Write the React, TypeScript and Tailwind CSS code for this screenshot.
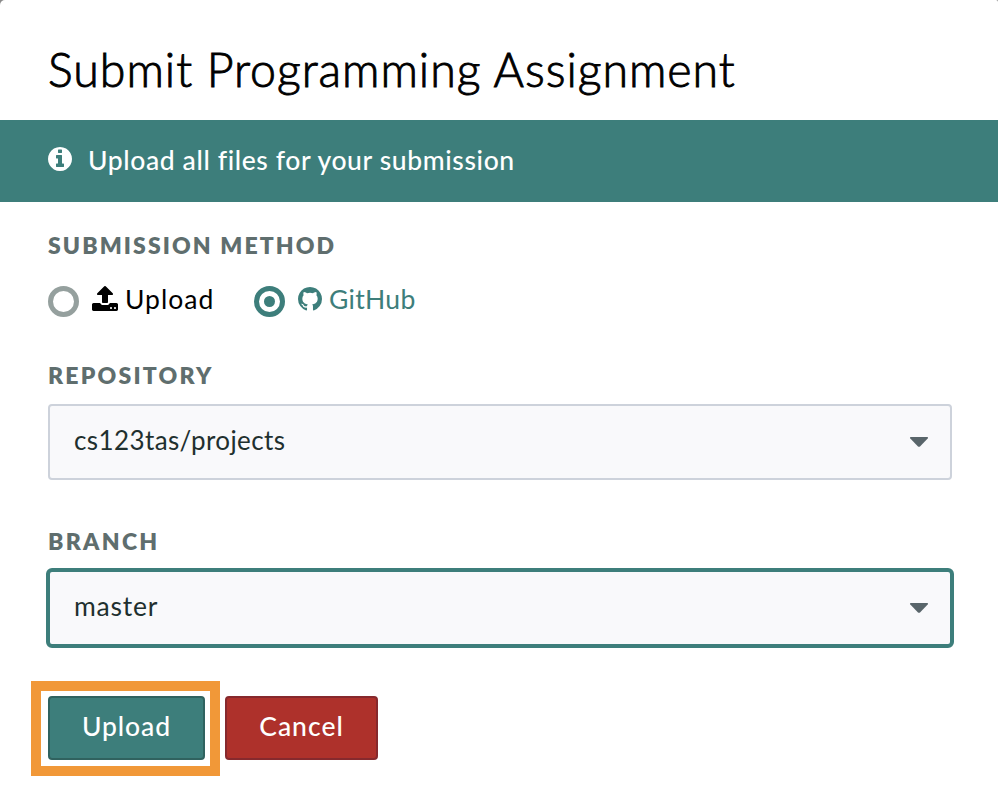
import React from "react";

function Icon({ d, className }: { d: string; className: string }) {
  return (
    <svg viewBox="0 0 1792 1792" fill="currentColor" className={className} aria-hidden="true">
      <path d={d} />
    </svg>
  );
}

const INFO =
  "M1152 1376v-160q0-14-9-23t-23-9h-96v-512q0-14-9-23t-23-9h-320q-14 0-23 9t-9 23v160q0 14 9 23t23 9h96v320h-96q-14 0-23 9t-9 23v160q0 14 9 23t23 9h448q14 0 23-9t9-23zm-128-896v-160q0-14-9-23t-23-9h-192q-14 0-23 9t-9 23v160q0 14 9 23t23 9h192q14 0 23-9t9-23zm640 416q0 209-103 385.5t-279.5 279.5-385.5 103-385.5-103-279.5-279.5-103-385.5 103-385.5 279.5-279.5 385.5-103 385.5 103 279.5 279.5 103 385.5z";
const UPLOAD =
  "M1344 1472q0-26-19-45t-45-19-45 19-19 45 19 45 45 19 45-19 19-45zm256 0q0-26-19-45t-45-19-45 19-19 45 19 45 45 19 45-19 19-45zm128-224v320q0 40-28 68t-68 28h-1472q-40 0-68-28t-28-68v-320q0-40 28-68t68-28h427q21 56 70.5 92t110.5 36h256q61 0 110.5-36t70.5-92h427q40 0 68 28t28 68zm-325-648q-17 40-59 40h-256v448q0 26-19 45t-45 19h-256q-26 0-45-19t-19-45v-448h-256q-42 0-59-40-17-39 14-69l448-448q18-19 45-19t45 19l448 448q31 30 14 69z";
const GITHUB =
  "M896 128q209 0 385.5 103t279.5 279.5 103 385.5q0 251-146.5 451.5t-378.5 277.5q-27 5-40-7t-13-30q0-3 .5-76.5t.5-134.5q0-97-52-142 57-6 102.5-18t94-39 81-66.5 53-105 20.5-150.5q0-119-79-206 37-91-8-204-28-9-81 11t-92 44l-38 24q-93-26-192-26t-192 26q-16-11-42.5-27t-83.5-38.5-85-13.5q-45 113-8 204-79 87-79 206 0 85 20.5 150t52.5 105 80.5 67 94 39 102.5 18q-39 36-49 103-21 10-45 15t-57 5-65.5-21.5-55.5-62.5q-19-32-48.5-52t-49.5-24l-20-3q-21 0-29 4.5t-5 11.5 9 14 13 12l7 5q22 10 43.5 38t31.5 51l10 23q13 38 44 61.5t67 30 69.5 7 55.5-3.5l23-4q0 38 .5 88.5t.5 54.5q0 18-13 30t-40 7q-232-77-378.5-277.5t-146.5-451.5q0-209 103-385.5t279.5-279.5 385.5-103z";

function Heading({ children, className }: { children: React.ReactNode; className: string }) {
  return (
    <h2 className={`text-[23px] leading-7 font-extrabold text-[#5f6e6e] uppercase ${className}`}>{children}</h2>
  );
}

function Caret() {
  return (
    <svg viewBox="0 0 20 12" className="h-3 w-5 fill-[#59656a]" aria-hidden="true">
      <path d="M1.6 1H18.4Q19.6 1.3 18.7 2.4L11 10.4Q10 11.3 9 10.4L1.3 2.4Q.4 1.3 1.6 1Z" />
    </svg>
  );
}

export default function App() {
  return (
    <div className="h-[806px] w-[998px] bg-[#8a8a8a] font-['Lato',sans-serif]">
      <main className="flex h-full flex-col rounded-tl-[5px] rounded-tr-[2px] bg-white">
        <header className="flex h-[120px] items-center px-12 pt-[19px]">
          <h1 className="text-[46.5px] leading-none font-light tracking-[0.97px] whitespace-nowrap text-black [-webkit-text-stroke:0.9px_black]">
            Submit Programming Assignment
          </h1>
        </header>
        <div className="flex h-[82px] items-center bg-[#3d7e7b] pr-12 pl-[46px] text-white">
          <Icon d={INFO} className="-mt-1 size-7" />
          <p className="-mt-[3px] ml-3.5 text-[26.5px] leading-8 font-medium tracking-[0.62px] whitespace-nowrap">
            Upload all files for your submission
          </p>
        </div>

        <form className="flex flex-col pr-[46px] pl-12 pt-[29px]" onSubmit={(e) => e.preventDefault()}>
          <Heading className="tracking-[2.1px]">Submission Method</Heading>
          <div className="mt-[25px] flex h-8 items-center text-[26.5px] leading-8">
            <label className="flex items-center text-black">
              <span className="mt-0.5 size-[31px] rounded-full border-[5px] border-[#95a09e]" />
              <Icon d={UPLOAD} className="-mt-0.5 ml-3 size-7" />
              <span className="-mt-0.5 ml-1.5 w-[88px] tracking-[1px]">Upload</span>
            </label>
            <label className="ml-[41px] flex items-center text-[#3d7e7b]">
              <span className="mt-0.5 flex size-[31px] items-center justify-center rounded-full border-[5px] border-[#3d7e7b]">
                <span className="size-[11px] rounded-full bg-[#3d7e7b]" />
              </span>
              <Icon d={GITHUB} className="-mt-0.5 ml-[11px] size-7" />
              <span className="-mt-0.5 ml-[5px] tracking-[0.3px]">GitHub</span>
            </label>
          </div>

          <Heading className="mt-[45px] tracking-[2.2px]">Repository</Heading>
          <button
            type="button"
            className="mt-[15px] flex h-[76px] items-center justify-between rounded-[4px] border-2 border-[#cdd2db] bg-[#f9f9fb] pr-[21px] pl-6 text-[26px] text-[#1f302f]"
          >
            <span className="-mt-[3px] tracking-[0.4px]">cs123tas/projects</span>
            <Caret />
          </button>

          <Heading className="mt-[47px] tracking-[2.3px]">Branch</Heading>
          <button
            type="button"
            className="-mx-0.5 mt-[13px] flex h-20 items-center justify-between rounded-[6px] border-4 border-[#3d7e7b] bg-[#f9f9fb] pr-[21px] pl-6 text-[26.5px] text-[#1f302f]"
          >
            <span className="-mt-0.5 tracking-[0.8px]">master</span>
            <Caret />
          </button>

          <div className="mt-[33px] -ml-[17px] flex items-start">
            <div className="h-[95px] w-[189px] border-10 border-[#f19838] pt-[5px] pl-[7px]">
              <button
                type="submit"
                className="block h-16 w-[157px] rounded-[4px] border-2 border-[#30625f] bg-[#3d7e7b] pb-0.5 text-[26.5px] font-medium tracking-[0.9px] text-white"
              >
                Upload
              </button>
            </div>
            <button
              type="button"
              className="mt-[15px] ml-[5px] h-16 w-[153px] rounded-[4px] border-2 border-[#86292d] bg-[#ae312b] pb-0.5 text-[26.5px] font-medium tracking-[1px] text-white"
            >
              Cancel
            </button>
          </div>
        </form>
      </main>
    </div>
  );
}
